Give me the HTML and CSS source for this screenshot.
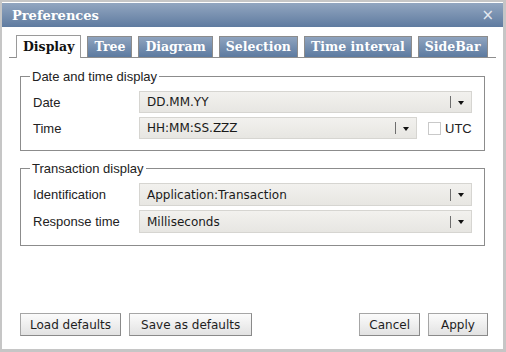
FILE: index.html
```html
<!DOCTYPE html>
<html>
<head>
<meta charset="utf-8">
<title>Preferences</title>
<link rel="stylesheet" href="styles.css">
</head>
<body>
<div class="dialog">
  <div class="titlebar">
    <span class="title">Preferences</span>
    <span class="close">×</span>
  </div>
  <div class="tabs">
    <div class="tab active">Display</div>
    <div class="tab">Tree</div>
    <div class="tab">Diagram</div>
    <div class="tab">Selection</div>
    <div class="tab">Time interval</div>
    <div class="tab">SideBar</div>
  </div>
  <div class="panel">
    <fieldset class="group">
      <legend>Date and time display</legend>
      <div class="row">
        <span class="label">Date</span>
        <div class="select wide"><span class="value">DD.MM.YY</span><span class="sep"></span><span class="arrow"></span></div>
      </div>
      <div class="row">
        <span class="label">Time</span>
        <div class="select narrow"><span class="value">HH:MM:SS.ZZZ</span><span class="sep"></span><span class="arrow"></span></div>
        <span class="check"></span><span class="checklabel">UTC</span>
      </div>
    </fieldset>
    <fieldset class="group second">
      <legend>Transaction display</legend>
      <div class="row">
        <span class="label">Identification</span>
        <div class="select wide"><span class="value">Application:Transaction</span><span class="sep"></span><span class="arrow"></span></div>
      </div>
      <div class="row">
        <span class="label">Response time</span>
        <div class="select wide"><span class="value">Milliseconds</span><span class="sep"></span><span class="arrow"></span></div>
      </div>
    </fieldset>
  </div>
  <div class="footer">
    <div class="btngroup">
      <button class="btn">Load defaults</button>
      <button class="btn wide">Save as defaults</button>
    </div>
    <div class="btngroup">
      <button class="btn">Cancel</button>
      <button class="btn">Apply</button>
    </div>
  </div>
</div>
</body>
</html>
```
FILE: styles.css
```css
* { box-sizing: border-box; }
html, body { margin: 0; padding: 0; background: #ffffff; }
body { width: 506px; height: 352px; overflow: hidden; }

.dialog {
  width: 506px;
  height: 352px;
  border: 2px solid #c6c6c6;
  border-right-width: 3px;
  border-bottom-width: 3px;
  background: #ffffff;
  display: flex;
  flex-direction: column;
}

.titlebar {
  height: 24px;
  margin-top: 1px;
  background: linear-gradient(#92a6c0, #5f7ba0);
  display: flex;
  align-items: center;
  justify-content: space-between;
  padding: 0 9px 0 10px;
  flex: none;
}
.title {
  font-family: "DejaVu Serif", serif;
  font-weight: bold;
  font-size: 13px;
  color: #ffffff;
}
.close {
  font-family: "DejaVu Sans", sans-serif;
  font-size: 15px;
  color: #e4e9f0;
  line-height: 1;
}

.tabs {
  display: flex;
  align-items: flex-end;
  gap: 6px;
  margin: 8px 7px 0 7px;
  padding-left: 7px;
  border-bottom: 1px solid #8e8e8e;
  height: 23px;
  flex: none;
}
.tab {
  height: 21px;
  padding: 0 6px;
  border: 1px solid #8c8c8c;
  border-bottom: none;
  background: linear-gradient(#8fa4bf, #5c7aa0);
  font-family: "DejaVu Serif", serif;
  font-weight: bold;
  font-size: 12.5px;
  line-height: 20px;
  color: #ffffff;
  white-space: nowrap;
}
.tab.active {
  height: 23px;
  margin-bottom: -1px;
  background: #ffffff;
  color: #111111;
  padding: 0 6px;
  line-height: 22px;
  border-color: #9a9a9a;
}

.panel {
  flex: 1;
  padding: 11px 18px 0 18px;
}

.group {
  margin: 0;
  border: 1px solid #8c8c8c;
  padding: 7px 12px 11px 12px;
  display: flex;
  flex-direction: column;
  gap: 4px;
}
.group legend {
  font-family: "Liberation Sans", Arial, sans-serif;
  font-size: 13px;
  line-height: 15px;
  color: #222222;
  padding: 0 2px;
  margin-left: -3px;
}
.group.second { margin-top: 10px; padding-bottom: 12px; }
.group.second .row { height: 23px; }
.group.second .select { height: 23px; }

.row {
  display: flex;
  align-items: center;
  height: 22px;
}
.label {
  width: 106px;
  flex: none;
  font-family: "Liberation Sans", Arial, sans-serif;
  font-size: 13px;
  color: #222222;
}

.select {
  height: 22px;
  border: 1px solid #d6d5d1;
  background: linear-gradient(#f2f1ee, #e7e6e2);
  display: flex;
  align-items: center;
  padding-left: 7px;
}
.select.wide { width: 333px; }
.select.narrow { width: 278px; }
.value {
  flex: 1;
  font-family: "DejaVu Sans", sans-serif;
  font-size: 12px;
  color: #1a1a1a;
  white-space: nowrap;
}
.sep {
  width: 1px;
  height: 12px;
  background: #6e6e6e;
  flex: none;
}
.arrow {
  width: 20px;
  flex: none;
  display: flex;
  justify-content: center;
  align-items: center;
  height: 12px;
}
.arrow::before {
  content: "";
  border-left: 3px solid transparent;
  border-right: 3px solid transparent;
  border-top: 4px solid #111111;
  margin-top: 1px;
}

.check {
  width: 13px;
  height: 13px;
  border: 1px solid #c9c9c9;
  background: #ffffff;
  margin-left: 11px;
  flex: none;
}
.checklabel {
  margin-left: 4px;
  font-family: "Liberation Sans", Arial, sans-serif;
  font-size: 13px;
  color: #222222;
}

.footer {
  flex: none;
  display: flex;
  justify-content: space-between;
  padding: 0 15px 13px 18px;
}
.btngroup {
  display: flex;
  gap: 8px;
}
.btn {
  height: 23px;
  min-width: 60px;
  padding: 0 9px;
  margin: 0;
  border: 1px solid #a6a6a6;
  border-right-color: #8a8a8a;
  border-bottom-color: #8a8a8a;
  border-radius: 0;
  background: linear-gradient(#fbfbfb, #e2e2e2);
  font-family: "DejaVu Sans", sans-serif;
  font-size: 12px;
  color: #1e1e1e;
}
.btn.wide { padding: 0 11px; }
```
